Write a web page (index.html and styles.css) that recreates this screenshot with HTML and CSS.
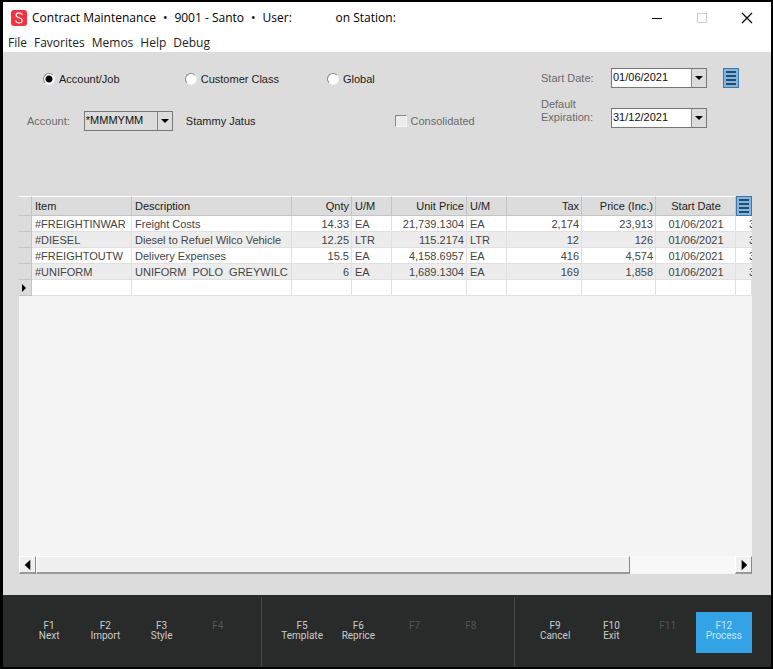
FILE: index.html
```html
<!DOCTYPE html>
<html lang="en">
<head>
  <meta charset="utf-8">
  <title>Contract Maintenance</title>
  <link rel="stylesheet" href="styles.css">
</head>
<body>
  <div class="window">
    <header class="title-bar">
      <svg class="logo" viewBox="0 0 16 16">
        <rect width="16" height="16" rx="3" fill="#f5333f"/>
        <path d="M11 5.2C10.8 3.6 9.6 2.9 8 2.9 6.300 2.900 5.100 3.800 5.100 5.200 5.100 8.400 11.200 7.200 11.200 10.600 11.200 12.100 9.900 13 8 13 6.200 13 4.900 12.200 4.800 10.500" fill="none" stroke="#fff" stroke-width="1.100"/>
      </svg>
      <div class="title">
        <span>Contract Maintenance</span>
        <span>•</span>
        <span>9001 - Santo</span>
        <span>•</span>
        <span class="user">User:</span>
        <span>on Station:</span>
      </div>
      <div class="window-controls">
        <button aria-label="Minimize"><svg viewBox="0 0 12 12"><path d="M1 6.500h10" stroke="#000"/></svg></button>
        <button aria-label="Maximize" disabled><svg viewBox="0 0 12 12"><rect x="1.500" y="1.500" width="9" height="9" fill="none" stroke="#ccc"/></svg></button>
        <button aria-label="Close"><svg viewBox="0 0 12 12"><path d="M1 1l10 10M11 1L1 11" stroke="#000" stroke-width="1.200"/></svg></button>
      </div>
    </header>

    <nav class="menu-bar">
      <button>File</button>
      <button>Favorites</button>
      <button>Memos</button>
      <button>Help</button>
      <button>Debug</button>
    </nav>

    <main class="content">
      <form class="criteria">
        <div class="scope">
          <div class="radio-row">
            <label><input type="radio" name="scope" checked>Account/Job</label>
            <label><input type="radio" name="scope">Customer Class</label>
            <label><input type="radio" name="scope">Global</label>
          </div>
          <div class="account-row">
            <label class="muted" for="account">Account:</label>
            <div class="combo combo-account">
              <select id="account"><option>*MMMYMM</option></select>
              <svg class="arrow" viewBox="0 0 14 18"><path d="M3 7h8l-4 4z"/></svg>
            </div>
            <span>Stammy Jatus</span>
            <label class="muted consolidated"><input type="checkbox" disabled>Consolidated</label>
          </div>
        </div>
        <div class="dates">
          <label class="muted" for="start-date">Start Date:</label>
          <div class="combo">
            <select id="start-date"><option>01/06/2021</option></select>
            <svg class="arrow" viewBox="0 0 14 18"><path d="M3 7h8l-4 4z"/></svg>
          </div>
          <button type="button" class="list-btn" aria-label="Date options">
            <svg viewBox="0 0 14 18"><path d="M2 3h10M2 7h10M2 11h10M2 15h10"/></svg>
          </button>
          <label class="muted" for="expiration">Default<br>Expiration:</label>
          <div class="combo">
            <select id="expiration"><option>31/12/2021</option></select>
            <svg class="arrow" viewBox="0 0 14 18"><path d="M3 7h8l-4 4z"/></svg>
          </div>
        </div>
      </form>

      <div class="grid">
        <table>
          <colgroup>
            <col class="w-handle"><col class="w-item"><col><col class="w-qty"><col class="w-unit">
            <col class="w-price"><col class="w-unit"><col class="w-price"><col class="w-total"><col class="w-date"><col class="w-more">
          </colgroup>
          <thead>
            <tr>
              <th></th>
              <th>Item</th>
              <th>Description</th>
              <th class="num">Qnty</th>
              <th>U/M</th>
              <th class="num">Unit Price</th>
              <th>U/M</th>
              <th class="num">Tax</th>
              <th class="num">Price (Inc.)</th>
              <th class="date">Start Date</th>
              <th class="more">
                <button class="list-btn" aria-label="Column options">
                  <svg viewBox="0 0 14 18"><path d="M2 3h10M2 7h10M2 11h10M2 15h10"/></svg>
                </button>
              </th>
            </tr>
          </thead>
          <tbody>
            <tr>
              <th></th><td>#FREIGHTINWAR</td><td>Freight Costs</td><td class="num">14.33</td><td>EA</td>
              <td class="num">21,739.1304</td><td>EA</td><td class="num">2,174</td><td class="num">23,913</td><td class="date">01/06/2021</td><td class="next">31/12/2021</td>
            </tr>
            <tr>
              <th></th><td>#DIESEL</td><td>Diesel to Refuel Wilco Vehicle</td><td class="num">12.25</td><td>LTR</td>
              <td class="num">115.2174</td><td>LTR</td><td class="num">12</td><td class="num">126</td><td class="date">01/06/2021</td><td class="next">31/12/2021</td>
            </tr>
            <tr>
              <th></th><td>#FREIGHTOUTW</td><td>Delivery Expenses</td><td class="num">15.5</td><td>EA</td>
              <td class="num">4,158.6957</td><td>EA</td><td class="num">416</td><td class="num">4,574</td><td class="date">01/06/2021</td><td class="next">31/12/2021</td>
            </tr>
            <tr>
              <th></th><td>#UNIFORM</td><td>UNIFORM&nbsp; POLO&nbsp; GREYWILC</td><td class="num">6</td><td>EA</td>
              <td class="num">1,689.1304</td><td>EA</td><td class="num">169</td><td class="num">1,858</td><td class="date">01/06/2021</td><td class="next">31/12/2021</td>
            </tr>
            <tr>
              <th><svg class="marker" viewBox="0 0 12 12"><path d="M3 2v8l4-4z"/></svg></th>
              <td></td><td></td><td></td><td></td><td></td><td></td><td></td><td></td><td></td><td></td>
            </tr>
          </tbody>
        </table>
        <div class="scrollbar">
          <button aria-label="Scroll left"><svg viewBox="0 0 16 16"><path d="M11 3v11L5 8.500z"/></svg></button>
          <div class="track"><div class="thumb"></div></div>
          <button aria-label="Scroll right"><svg viewBox="0 0 16 16"><path d="M6 3v11l6-5.500z"/></svg></button>
        </div>
      </div>
    </main>

    <footer class="function-keys">
      <div class="key-group">
        <button>F1<br>Next</button>
        <button>F2<br>Import</button>
        <button>F3<br>Style</button>
        <button disabled>F4</button>
      </div>
      <div class="key-group">
        <button>F5<br>Template</button>
        <button>F6<br>Reprice</button>
        <button disabled>F7</button>
        <button disabled>F8</button>
      </div>
      <div class="key-group">
        <button>F9<br>Cancel</button>
        <button>F10<br>Exit</button>
        <button disabled>F11</button>
        <button class="primary">F12<br>Process</button>
      </div>
    </footer>
  </div>
</body>
</html>
```
FILE: styles.css
```css
:root {
  --panel: #dcdcdc;
  --line: #c4c4c4;
  --cell-line: #e0e0e0;
  --muted: #6a6a6a;
  --text: #222;
  --footer: #292a2a;
  --accent: #33a3e6;
}

* {
  box-sizing: border-box;
}

body {
  margin: 0;
  font-family: "Liberation Sans", Arial, sans-serif;
  font-size: 11px;
  color: var(--text);
}

button {
  font: inherit;
  color: inherit;
  border: 0;
  padding: 0;
  background: none;
}

svg {
  display: block;
}

.window {
  display: flex;
  flex-direction: column;
  min-height: 100vh;
  border: 2px solid #000;
  border-left-width: 3px;
  background: var(--panel);
}

/* Title and menu */
.title-bar {
  display: flex;
  align-items: center;
  height: 31px;
  padding-left: 8px;
  background: #fff;
  font-family: "Open Sans", "Noto Sans", sans-serif;
  font-size: 12px;
  line-height: 16px;
  color: #000;
}

.logo {
  width: 16px;
  height: 16px;
}

.title {
  display: flex;
  flex: 1;
  gap: 7px;
  padding-left: 5px;
  white-space: nowrap;
}

.user {
  width: 66px;
}

.window-controls {
  display: flex;
  padding-right: 2px;
}

.window-controls button {
  display: flex;
  justify-content: center;
  width: 45px;
}

.window-controls svg {
  width: 12px;
  height: 12px;
}

.menu-bar {
  display: flex;
  gap: 7px;
  height: 19px;
  padding-left: 5px;
  background: #fff;
  font-family: "Open Sans", "Noto Sans", sans-serif;
  font-size: 12px;
  line-height: 18px;
}

/* Criteria */
.content {
  display: flex;
  flex: 1;
  flex-direction: column;
  padding: 16px 19px 21px 16px;
}

.criteria {
  display: flex;
  justify-content: space-between;
  height: 128px;
  padding: 0 13px 0 8px;
}

.muted {
  color: var(--muted);
}

.radio-row {
  display: flex;
  gap: 48px;
  padding: 3px 0 0 16px;
}

.radio-row label,
.consolidated {
  display: flex;
  align-items: center;
  gap: 4px;
  height: 16px;
  white-space: nowrap;
}

.radio-row label {
  width: 94px;
}

input {
  appearance: none;
  margin: 0;
  width: 12px;
  height: 12px;
  background: #fff;
  border: 1px solid #f4f4f4;
  border-top-color: #888;
  border-left-color: #888;
}

input[type="radio"] {
  border-radius: 50%;
}

input[type="radio"]:checked {
  background: radial-gradient(circle, #000 3px, #fff 4px);
}

input:disabled {
  background: #ececec;
}

.account-row {
  display: flex;
  align-items: center;
  padding-top: 24px;
}

.combo-account {
  width: 89px;
  margin: 0 13px 0 14px;
}

.combo {
  position: relative;
  height: 20px;
}

.combo select {
  appearance: none;
  width: 100%;
  height: 20px;
  padding: 0 16px 2px 1px;
  border: 1px solid #777;
  border-radius: 0;
  background: #fff;
  font: inherit;
  color: #111;
}

.combo-account select {
  background: var(--panel);
}

/* drop-down button drawn over the end of the select */
.arrow {
  position: absolute;
  top: 1px;
  right: 1px;
  width: 15px;
  height: 18px;
  border-left: 1px solid #888;
  background: var(--panel);
  pointer-events: none;
}

.consolidated {
  margin-left: 139px;
}

.dates {
  display: grid;
  grid-template-columns: 70px 96px 32px;
  grid-template-rows: 20px 30px;
  row-gap: 10px;
  align-content: start;
  line-height: 13px;
}

.dates .combo {
  align-self: end;
}

.dates label:first-child {
  align-self: center;
}

.dates .list-btn {
  margin-left: 16px;
}

.list-btn {
  display: block;
  width: 16px;
  height: 20px;
  border: 1px solid #45779f;
  background: #7cb5e6;
}

.list-btn svg {
  width: 14px;
  height: 18px;
  stroke: #2b4a63;
  stroke-width: 2;
}

/* Item grid */
.grid {
  display: flex;
  flex: 1;
  flex-direction: column;
  background: #f4f4f4;
}

table {
  width: 100%;
  table-layout: fixed;
  border-spacing: 0;
}

.w-handle { width: 13px; }
.w-item { width: 100px; }
.w-qty { width: 60px; }
.w-unit { width: 40px; }
.w-price { width: 75px; }
.w-total { width: 74px; }
.w-date { width: 80px; }
.w-more { width: 16px; }

th,
td {
  height: 16px;
  padding: 0 2px 0 3px;
  overflow: hidden;
  border-right: 1px solid var(--cell-line);
  border-bottom: 1px solid var(--cell-line);
  font-weight: normal;
  line-height: 14px;
  text-align: left;
  white-space: nowrap;
}

th {
  background: var(--panel);
  border-color: var(--line);
}

thead th {
  height: 20px;
  border-top: 1px solid #fff;
}

td {
  background: #fff;
  color: #444;
}

tbody tr:nth-child(even) td {
  background: #ececec;
}

.num {
  text-align: right;
}

.date {
  text-align: center;
}

th.more {
  padding: 0;
  border: 0;
}

.next {
  padding: 0 0 0 13px;
  border-right: 0;
}

.marker {
  width: 12px;
  height: 12px;
}

tbody th {
  padding: 0;
}

.scrollbar {
  display: flex;
  height: 18px;
  margin-top: auto;
}

.scrollbar button,
.thumb {
  height: 18px;
  border: 1px solid #fff;
  border-right: 1px solid #888;
  border-bottom: 2px solid #999;
  background: #f0f0f0;
}

.scrollbar button {
  width: 17px;
}

.scrollbar svg {
  width: 15px;
  height: 15px;
}

.track {
  flex: 1;
  background: #f8f8f8;
}

.thumb {
  width: 85%;
}

/* Function keys */
.function-keys {
  display: flex;
  height: 72px;
  padding: 2px 19px 0 18px;
  background: var(--footer);
  color: #ccc;
  font-family: Roboto, sans-serif;
  font-size: 10px;
  line-height: 10px;
}

.key-group {
  display: flex;
  flex: 1 1 auto;
  align-items: center;
  padding-left: 12px;
}

.key-group:first-child {
  padding-left: 0;
}

.key-group:not(:last-child) {
  padding-right: 15px;
  border-right: 1px solid #484848;
}

.key-group button {
  display: flex;
  flex-direction: column;
  flex: 1 0 56px;
  height: 41px;
  padding-top: 9px;
  align-items: center;
}

.key-group button:disabled {
  color: #555;
}

.key-group .primary {
  background: var(--accent);
  color: #c4e6ff;
}
```
